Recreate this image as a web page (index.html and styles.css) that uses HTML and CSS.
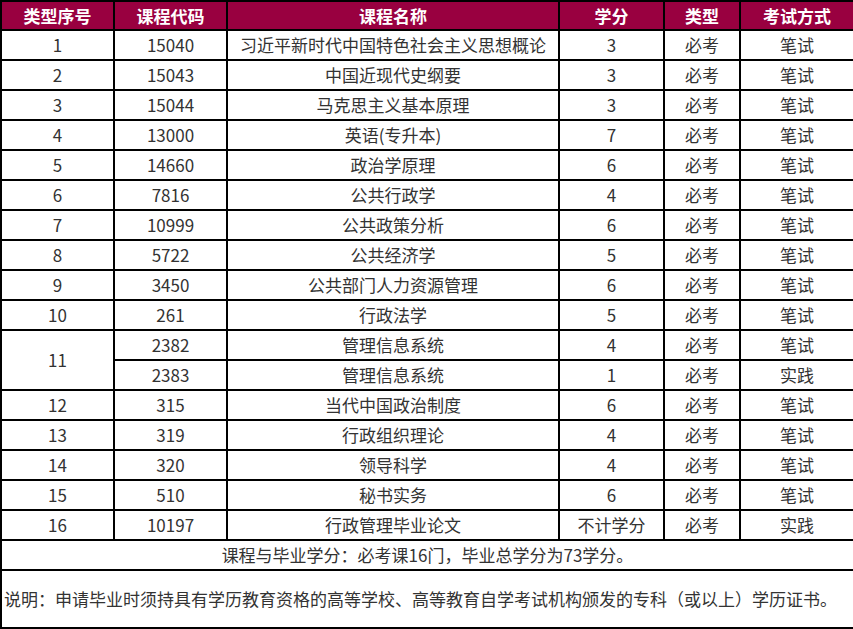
FILE: index.html
```html
<!DOCTYPE html>
<html lang="zh">
<head>
<meta charset="utf-8">
<link rel="stylesheet" href="styles.css">
</head>
<body>
<table class="plan">
  <colgroup>
    <col class="c1"><col class="c2"><col class="c3"><col class="c4"><col class="c5"><col class="c6">
  </colgroup>
  <thead>
    <tr><th>类型序号</th><th>课程代码</th><th>课程名称</th><th>学分</th><th>类型</th><th>考试方式</th></tr>
  </thead>
  <tbody>
    <tr><td>1</td><td>15040</td><td>习近平新时代中国特色社会主义思想概论</td><td>3</td><td>必考</td><td>笔试</td></tr>
    <tr><td>2</td><td>15043</td><td>中国近现代史纲要</td><td>3</td><td>必考</td><td>笔试</td></tr>
    <tr><td>3</td><td>15044</td><td>马克思主义基本原理</td><td>3</td><td>必考</td><td>笔试</td></tr>
    <tr><td>4</td><td>13000</td><td>英语(专升本)</td><td>7</td><td>必考</td><td>笔试</td></tr>
    <tr><td>5</td><td>14660</td><td>政治学原理</td><td>6</td><td>必考</td><td>笔试</td></tr>
    <tr><td>6</td><td>7816</td><td>公共行政学</td><td>4</td><td>必考</td><td>笔试</td></tr>
    <tr><td>7</td><td>10999</td><td>公共政策分析</td><td>6</td><td>必考</td><td>笔试</td></tr>
    <tr><td>8</td><td>5722</td><td>公共经济学</td><td>5</td><td>必考</td><td>笔试</td></tr>
    <tr><td>9</td><td>3450</td><td>公共部门人力资源管理</td><td>6</td><td>必考</td><td>笔试</td></tr>
    <tr><td>10</td><td>261</td><td>行政法学</td><td>5</td><td>必考</td><td>笔试</td></tr>
    <tr><td rowspan="2">11</td><td>2382</td><td>管理信息系统</td><td>4</td><td>必考</td><td>笔试</td></tr>
    <tr><td>2383</td><td>管理信息系统</td><td>1</td><td>必考</td><td>实践</td></tr>
    <tr><td>12</td><td>315</td><td>当代中国政治制度</td><td>6</td><td>必考</td><td>笔试</td></tr>
    <tr><td>13</td><td>319</td><td>行政组织理论</td><td>4</td><td>必考</td><td>笔试</td></tr>
    <tr><td>14</td><td>320</td><td>领导科学</td><td>4</td><td>必考</td><td>笔试</td></tr>
    <tr><td>15</td><td>510</td><td>秘书实务</td><td>6</td><td>必考</td><td>笔试</td></tr>
    <tr><td>16</td><td>10197</td><td>行政管理毕业论文</td><td>不计学分</td><td>必考</td><td>实践</td></tr>
    <tr><td colspan="6">课程与毕业学分：必考课16门，毕业总学分为73学分。</td></tr>
    <tr class="note"><td colspan="6">说明：申请毕业时须持具有学历教育资格的高等学校、高等教育自学考试机构颁发的专科（或以上）学历证书。</td></tr>
  </tbody>
</table>
</body>
</html>
```

FILE: styles.css
```css
html, body {
  margin: 0;
  padding: 0;
  background: #ffffff;
}
.plan {
  border-collapse: collapse;
  width: 853px;
  table-layout: fixed;
  font-family: "Noto Sans CJK SC", "Noto Sans", sans-serif;
  font-size: 17px;
  color: #333333;
}
.c1 { width: 113px; }
.c2 { width: 113px; }
.c3 { width: 332px; }
.c4 { width: 105px; }
.c5 { width: 76px; }
.c6 { width: 114px; }
.plan th,
.plan td {
  border: 2px solid #000000;
  padding: 0;
  height: 28px;
  text-align: center;
  vertical-align: middle;
  line-height: 20px;
  white-space: nowrap;
}
.plan th {
  height: 27px;
  background: #990040;
  color: #ffffff;
  font-weight: bold;
}
.plan .note td {
  height: 56px;
  text-align: left;
  padding-left: 2px;
}
```
